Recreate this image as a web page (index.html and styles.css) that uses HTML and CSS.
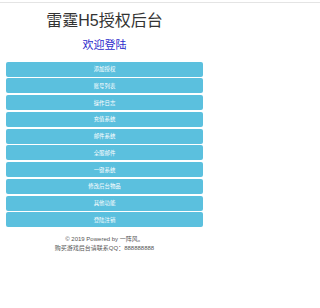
FILE: index.html
```html
<!DOCTYPE html>
<html lang="zh-CN">
<head>
<meta charset="utf-8">
<title>雷霆H5授权后台</title>
<link rel="stylesheet" href="styles.css">
</head>
<body>
<div class="topline"></div>
<div class="wrap">
  <h1 class="title">雷霆H5授权后台</h1>
  <h2 class="welcome">欢迎登陆</h2>
  <nav class="menu">
    <a class="btn" href="#">添加授权</a>
    <a class="btn" href="#">账号列表</a>
    <a class="btn" href="#">操作日志</a>
    <a class="btn" href="#">充值系统</a>
    <a class="btn" href="#">邮件系统</a>
    <a class="btn" href="#">全服邮件</a>
    <a class="btn" href="#">一键系统</a>
    <a class="btn" href="#">修改后台物品</a>
    <a class="btn" href="#">其他功能</a>
    <a class="btn" href="#">登陆注销</a>
  </nav>
  <footer class="foot">
    <p>© 2019 Powered by 一阵风。</p>
    <p>购买游戏后台请联系QQ：888888888</p>
  </footer>
</div>
</body>
</html>
```

FILE: styles.css
```css
html, body {
  margin: 0;
  padding: 0;
  background: #fff;
  font-family: "Liberation Sans", "Noto Sans CJK SC", sans-serif;
}
.topline {
  margin-top: 2px;
  height: 1px;
  background: #e4e4e4;
}
.wrap {
  width: 197px;
  margin-left: 6px;
}
.title {
  margin: 7.5px 0 0;
  font-size: 16px;
  line-height: 20px;
  font-weight: normal;
  color: #333;
  text-align: center;
}
.welcome {
  margin: 7px 0 0;
  font-size: 11px;
  line-height: 14px;
  font-weight: normal;
  color: #2b2bcc;
  text-align: center;
}
.menu {
  margin-top: 10px;
  display: flex;
  flex-direction: column;
  gap: 1.75px;
}
.btn {
  display: flex;
  align-items: center;
  justify-content: center;
  height: 15px;
  background: #5bc0de;
  border-radius: 2px;
  color: #fff;
  font-size: 5.4px;
  text-decoration: none;
}
.foot {
  padding-top: 8px;
  text-align: center;
  color: #555;
  font-size: 6px;
  line-height: 9px;
}
.foot p {
  margin: 0;
}
```
